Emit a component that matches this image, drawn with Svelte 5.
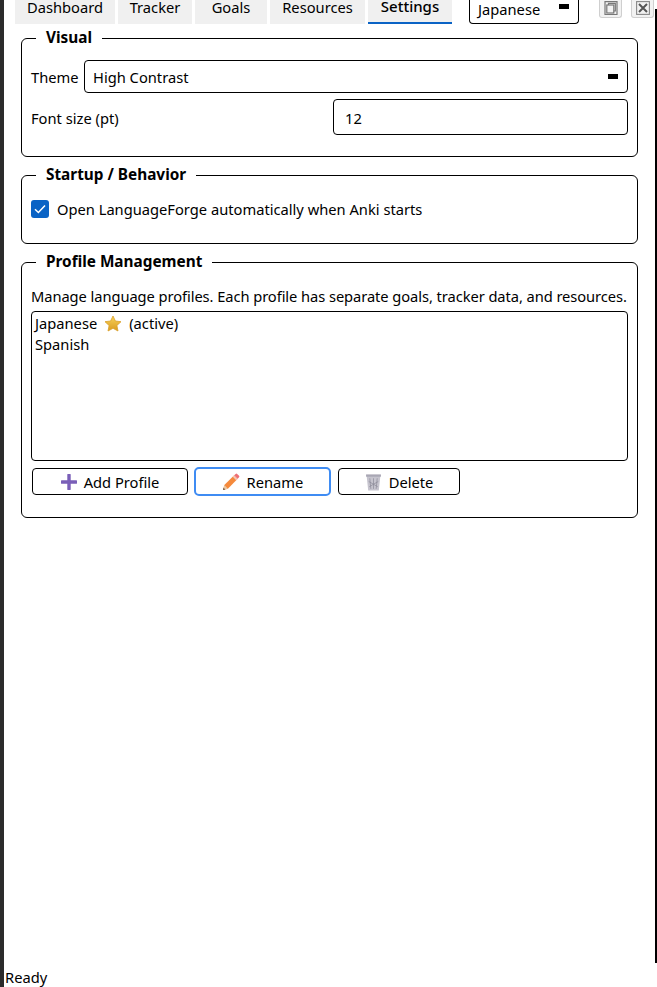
<script>
  const tabs = ['Dashboard', 'Tracker', 'Goals', 'Resources', 'Settings'];
  const active = 'Settings';
</script>

<div class="window">
  <div class="edge"></div>
  <header class="top">
    <nav class="tabs">
      {#each tabs as tab}
        <div class="tab" class:active={tab === active}><span>{tab}</span></div>
      {/each}
    </nav>
    <div class="profile-combo">
      <span>Japanese</span>
      <i class="arrow"></i>
    </div>
    <div class="corner">
      <button class="win" aria-label="Float">
        <svg width="14" height="14" viewBox="0 0 14 14" fill="none" stroke="#777" stroke-width="1.2"><rect x="1" y="0.6" width="12" height="13" /><rect x="2.8" y="4" width="7" height="8" /><path d="M4.5 4V2.3h6.8v7.7H9.8" /></svg>
      </button>
      <button class="win" aria-label="Close">
        <svg width="14" height="14" viewBox="0 0 14 14" fill="none"><rect x="0.6" y="0.6" width="12.8" height="12.8" stroke="#888" stroke-width="1.1" /><path d="M3 3l8 8M11 3l-8 8" stroke="#555" stroke-width="2" /></svg>
      </button>
    </div>
  </header>

  <main class="page">
    <fieldset class="group visual">
      <legend>Visual</legend>
      <div class="theme-row">
        <span>Theme</span>
        <div class="combo"><span>High Contrast</span><i class="arrow"></i></div>
      </div>
      <div class="font-row">
        <span class="nudge">Font size (pt)</span>
        <div class="spin"><span class="nudge">12</span></div>
      </div>
    </fieldset>

    <fieldset class="group startup">
      <legend>Startup / Behavior</legend>
      <div class="check-row">
        <span class="check">
          <svg width="12" height="10" viewBox="0 0 12 10" fill="none"><path d="M1 5.2l3.4 3.3L11 1.4" stroke="#fff" stroke-width="1.5" /></svg>
        </span>
        <span>Open LanguageForge automatically when Anki starts</span>
      </div>
    </fieldset>

    <fieldset class="group profiles">
      <legend>Profile Management</legend>
      <p class="hint">Manage language profiles. Each profile has separate goals, tracker data, and resources.</p>
      <div class="list">
        <div class="item">
          Japanese
          <svg class="star" width="18" height="17" viewBox="0 0 18 17"><defs><linearGradient id="st" x1="0" y1="0" x2="0" y2="1"><stop offset="0" stop-color="#f8d35a" /><stop offset="1" stop-color="#d99a1e" /></linearGradient></defs><path d="M9 1l2.4 5 5.6.7-4.1 3.8 1.1 5.5L9 13.3 4 16l1.1-5.5L1 6.7 6.6 6z" fill="url(#st)" stroke="#d9a02a" stroke-width="0.8" stroke-linejoin="round" /></svg>
          (active)
        </div>
        <div class="item">Spanish</div>
      </div>
      <div class="actions">
        <button class="btn add">
          <svg width="16" height="16" viewBox="0 0 16 16"><path d="M8 1v14M1 8h14" stroke="#7a5fb8" stroke-width="3.4" stroke-linecap="round" /></svg>
          Add Profile
        </button>
        <button class="btn rename">
          <svg width="18" height="18" viewBox="0 0 17 17"><path d="M1 16l1.2-4.6L11.5 2.2l3.3 3.3L5.6 14.8z" fill="#f58a3c" /><path d="M11.5 2.2l1.4-1.3a1 1 0 0 1 1.4 0l1.8 1.8a1 1 0 0 1 0 1.4l-1.3 1.4z" fill="#ee6f75" /><path d="M10.7 3l3.3 3.3" stroke="#f2c9c0" stroke-width="1.6" /><path d="M1 16l1.2-4.6 3.4 3.4z" fill="#e9c7a2" /><path d="M1 16l.5-2 1.5 1.5z" fill="#55493f" /></svg>
          Rename
        </button>
        <button class="btn delete">
          <svg width="17" height="18" viewBox="0 0 16 17"><path d="M1 1.5h14l-.6 2-1.4 13H3L1.6 3.5z" fill="#c6c4ce" /><path d="M1 1.5h14v2H1z" fill="#a9a7b4" /><path d="M4.5 5l1 10M8 5v10M11.5 5l-1 10M3.5 8l8.5 5M12.5 8L4 13" stroke="#8f8d9b" stroke-width="0.7" fill="none" /></svg>
          Delete
        </button>
      </div>
    </fieldset>
  </main>

  <footer class="status">Ready</footer>
</div>

<style>
  :global(body) {
    margin: 0;
    background: #fff;
  }
  .window {
    position: relative;
    box-sizing: border-box;
    width: 657px;
    height: 987px;
    overflow: hidden;
    display: flex;
    flex-direction: column;
    border-left: 4px solid #2b2b2b;
    background: #fff;
    color: #000;
    font-family: "Noto Sans", "Open Sans", sans-serif;
    font-size: 14.7px;
  }
  .edge {
    position: absolute;
    right: 0;
    top: 9px;
    width: 2.5px;
    height: 954px;
    background: #000;
  }
  .top {
    flex: none;
    height: 24px;
    display: flex;
    align-items: flex-start;
    padding-left: 11px;
  }
  .tabs {
    display: grid;
    grid-template-columns: 100px 74px 72px 95px 84px;
    column-gap: 3px;
  }
  .tab {
    box-sizing: border-box;
    height: 24px;
    background: #f0f0f0;
    text-align: center;
    line-height: 14px;
  }
  .tab.active {
    border-bottom: 2px solid #0a63c5;
    line-height: 12px;
    font-weight: 500;
    font-size: 15px;
  }
  .profile-combo {
    box-sizing: border-box;
    width: 110px;
    height: 24px;
    margin-left: 17px;
    padding: 0 9px 0 8px;
    display: flex;
    justify-content: space-between;
    align-items: flex-start;
    border: 1px solid #000;
    border-top: none;
    border-radius: 0 0 4px 4px;
    line-height: 18px;
  }
  .arrow {
    flex: none;
    display: block;
    width: 10px;
    height: 5px;
    background: #000;
    margin-top: 4px;
  }
  .corner {
    display: flex;
    gap: 9px;
    margin-left: 20px;
  }
  .win {
    box-sizing: border-box;
    width: 23px;
    height: 18px;
    padding: 0 0 2px;
    display: flex;
    justify-content: center;
    align-items: flex-end;
    background: #f2f2f2;
    border: 1px solid #cfcfcf;
    border-top: none;
    border-radius: 0 0 3px 3px;
  }
  .page {
    flex: 1;
    display: flex;
    flex-direction: column;
    padding: 4px 19px 0 17px;
  }
  .group {
    box-sizing: border-box;
    margin: 0 0 8px;
    min-width: 0;
    border: 1px solid #000;
    border-radius: 6px;
    padding: 0 9px;
  }
  legend {
    margin-left: 5px;
    padding: 0 10px;
    font-weight: 700;
    line-height: 18px;
    height: 20px;
    font-size: 15.35px;
  }
  .visual {
    height: 129px;
  }
  .startup {
    height: 79px;
  }
  .profiles {
    height: 266px;
  }
  .theme-row {
    display: grid;
    grid-template-columns: 53px 1fr;
    align-items: center;
    margin-top: 12px;
  }
  .combo {
    box-sizing: border-box;
    height: 33px;
    padding: 0 9px 0 8px;
    display: flex;
    justify-content: space-between;
    align-items: center;
    border: 1px solid #000;
    border-radius: 4px;
  }
  .combo .arrow {
    margin: -1px 0 0;
  }
  .font-row {
    display: grid;
    grid-template-columns: 302px 295px;
    align-items: center;
    margin-top: 6px;
  }
  .nudge {
    padding-top: 2px;
  }
  .spin {
    box-sizing: border-box;
    height: 36px;
    padding: 0 11px;
    display: flex;
    align-items: center;
    border: 1px solid #000;
    border-radius: 4px;
  }
  .check-row {
    display: flex;
    align-items: center;
    gap: 8px;
    margin-top: 14px;
  }
  .check {
    box-sizing: border-box;
    width: 18px;
    height: 18px;
    display: flex;
    align-items: center;
    justify-content: center;
    background: #0a63c5;
    border-radius: 3px;
  }
  .hint {
    margin: 14px 0 0;
    line-height: 20px;
    white-space: nowrap;
    letter-spacing: -0.07px;
  }
  .list {
    box-sizing: border-box;
    height: 150px;
    margin-top: 5px;
    padding: 1px 3px;
    border: 1px solid #000;
    border-radius: 4px;
  }
  .item {
    height: 21px;
    line-height: 21px;
    display: flex;
    align-items: center;
    gap: 6px;
  }
  .star {
    flex: none;
    margin: 0 1px;
  }
  .actions {
    display: flex;
    align-items: center;
    margin-top: 6px;
    padding-left: 1px;
  }
  .btn {
    box-sizing: border-box;
    height: 27px;
    padding: 0;
    display: flex;
    align-items: center;
    justify-content: center;
    gap: 7px;
    background: #fff;
    color: #000;
    font: inherit;
    border: 1px solid #000;
    border-radius: 4px;
  }
  .add {
    width: 156px;
  }
  .rename {
    width: 137px;
    height: 29px;
    margin: 0 7px 0 6px;
    border: 2px solid #3f8cf3;
    border-radius: 5px;
  }
  .delete {
    width: 122px;
  }
  .status {
    flex: none;
    height: 19px;
    line-height: 19px;
    padding-left: 1px;
  }
</style>
